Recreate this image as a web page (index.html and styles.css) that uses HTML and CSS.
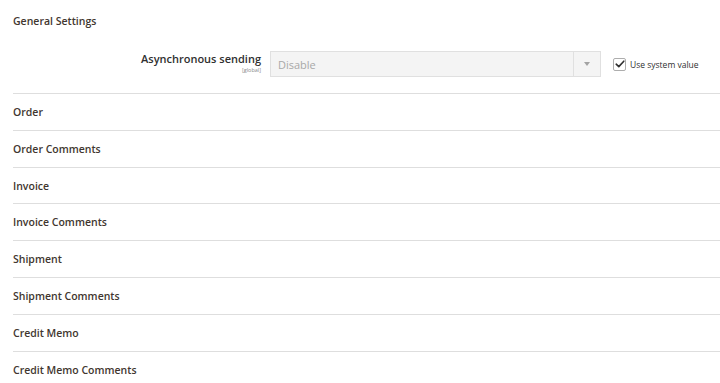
FILE: index.html
```html
<!DOCTYPE html>
<html>
<head>
<meta charset="utf-8">
<link rel="stylesheet" href="styles.css">
</head>
<body>
<div class="page">
  <div class="group-head">General Settings</div>
  <div class="field">
    <div class="label">
      <span class="label-text">Asynchronous sending</span>
      <span class="scope">[global]</span>
    </div>
    <div class="select">
      <span class="select-value">Disable</span>
      <span class="select-arrow"><span class="tri"></span></span>
    </div>
    <label class="inherit">
      <span class="checkbox">
        <svg width="10" height="8" viewBox="0 0 10 8"><path d="M1.2 4.2 L3.8 6.6 L8.8 1.2" fill="none" stroke="#303030" stroke-width="1.6" stroke-linecap="round" stroke-linejoin="round"/></svg>
      </span>
      <span class="inherit-text">Use system value</span>
    </label>
  </div>
  <div class="section">Order</div>
  <div class="section">Order Comments</div>
  <div class="section">Invoice</div>
  <div class="section">Invoice Comments</div>
  <div class="section">Shipment</div>
  <div class="section">Shipment Comments</div>
  <div class="section">Credit Memo</div>
  <div class="section">Credit Memo Comments</div>
</div>
</body>
</html>
```
FILE: styles.css
```css
* { box-sizing: border-box; }
html, body { margin: 0; padding: 0; background: #fff; }
body {
  font-family: "Open Sans", "Noto Sans", sans-serif;
  color: #41362f;
  overflow: hidden;
}
.page { padding-left: 13px; }
.group-head {
  font-size: 10.5px;
  font-weight: 600;
  line-height: 14px;
  padding-top: 14px;
  height: 42px;
}
.field {
  display: flex;
  align-items: flex-start;
  margin-top: 9px;
  padding-bottom: 16px;
}
.label {
  width: 248px;
  display: flex;
  flex-direction: column;
  align-items: flex-end;
  padding-top: 1px;
}
.label-text {
  font-size: 11px;
  font-weight: 600;
  line-height: 14px;
  color: #303030;
}
.scope {
  font-size: 5.5px;
  color: #8a8a8a;
  line-height: 7px;
  margin-top: 1px;
}
.select {
  margin-left: 9px;
  width: 331px;
  height: 26px;
  background: #f4f4f4;
  border: 1px solid #e0e0e0;
  display: flex;
  align-items: center;
}
.select-value {
  flex: 1;
  padding-left: 7px;
  font-size: 11px;
  color: #a8a8a8;
}
.select-arrow {
  width: 27px;
  height: 100%;
  border-left: 1px solid #e0e0e0;
  display: flex;
  align-items: center;
  justify-content: center;
}
.tri {
  width: 0; height: 0;
  border-left: 3.5px solid transparent;
  border-right: 3.5px solid transparent;
  border-top: 4px solid #a3a3a3;
}
.inherit {
  margin-left: 12px;
  display: flex;
  align-items: center;
  height: 26px;
}
.checkbox {
  width: 13px;
  height: 13px;
  border: 1px solid #adadad;
  border-radius: 2px;
  background: #fff;
  display: flex;
  align-items: center;
  justify-content: center;
}
.inherit-text {
  margin-left: 4px;
  font-size: 8.5px;
  color: #303030;
}
.section {
  border-top: 1px solid #dedede;
  height: 36.8px;
  line-height: 36px;
  font-size: 10.5px;
  font-weight: 600;
}
```
